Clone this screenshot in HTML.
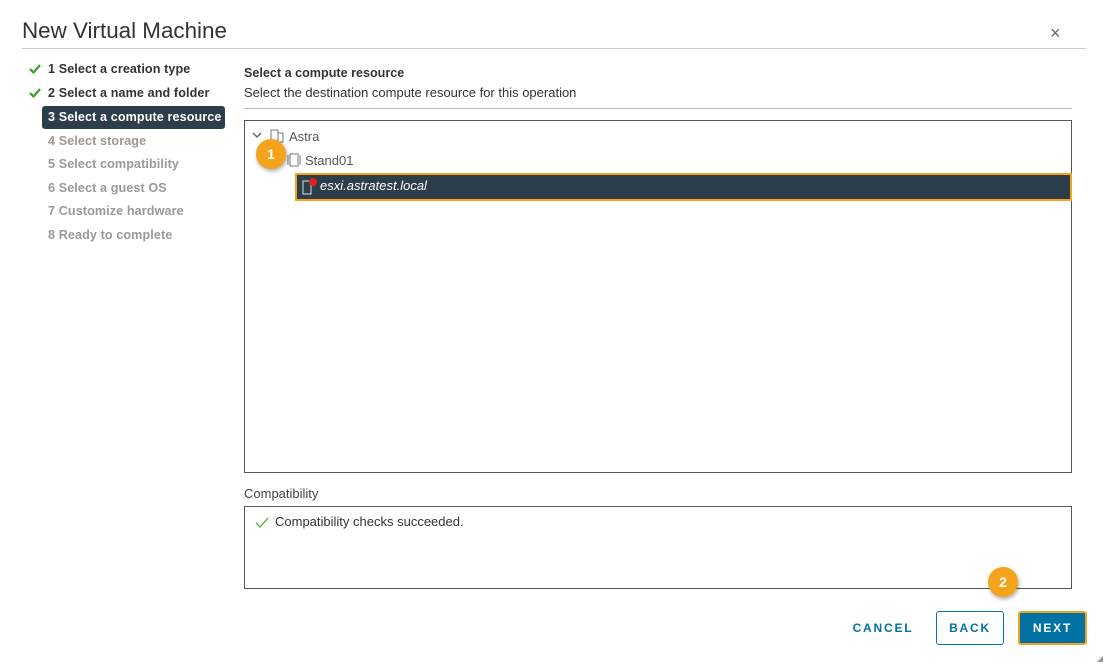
<!DOCTYPE html>
<html><head><style>
*{margin:0;padding:0;box-sizing:border-box}
body{width:1109px;height:668px;background:#fff;font-family:"Liberation Sans",sans-serif;position:relative;overflow:hidden;color:#333}
.a{position:absolute;white-space:nowrap}
.step{position:absolute;left:48px;font-size:12.6px;font-weight:bold;color:#999;letter-spacing:0.1px}
.done{color:#333}
.chk{position:absolute;left:29px}
.badge{position:absolute;width:30px;height:30px;border-radius:50%;background:#f5a31a;color:#fff;font-weight:bold;font-size:14px;text-align:center;line-height:30px;box-shadow:1px 2px 4px rgba(0,0,0,.35)}
.btn{position:absolute;font-size:12px;font-weight:bold;letter-spacing:1.8px;text-align:center;border-radius:3px}
</style></head><body>
<div class="a" style="left:22px;top:18px;font-size:22.4px;color:#333">New Virtual Machine</div>
<div class="a" style="left:1050px;top:23px;font-size:18px;color:#666">×</div>
<div class="a" style="left:22px;top:48px;width:1064px;height:1px;background:#ccc"></div>

<svg class="chk" style="top:64px" width="12" height="10"><path d="M1 5l3.5 3.5L11 1" stroke="#3c9b2e" stroke-width="2.2" fill="none"/></svg>
<svg class="chk" style="top:88px" width="12" height="10"><path d="M1 5l3.5 3.5L11 1" stroke="#3c9b2e" stroke-width="2.2" fill="none"/></svg>
<div class="step done" style="top:62px">1 Select a creation type</div>
<div class="step done" style="top:86px">2 Select a name and folder</div>
<div class="a" style="left:42px;top:106px;width:183px;height:23px;background:#2d3e4b;border-radius:3px"></div>
<div class="step" style="top:110px;color:#fff">3 Select a compute resource</div>
<div class="step" style="top:134px">4 Select storage</div>
<div class="step" style="top:157px">5 Select compatibility</div>
<div class="step" style="top:181px">6 Select a guest OS</div>
<div class="step" style="top:204px">7 Customize hardware</div>
<div class="step" style="top:228px">8 Ready to complete</div>

<div class="a" style="left:244px;top:66px;font-size:12.6px;font-weight:bold;color:#333">Select a compute resource</div>
<div class="a" style="left:244px;top:85px;font-size:13px;color:#333">Select the destination compute resource for this operation</div>
<div class="a" style="left:244px;top:108px;width:828px;height:1px;background:#bbb"></div>

<div class="a" style="left:244px;top:120px;width:828px;height:353px;border:1px solid #565656"></div>
<svg class="a" style="left:252px;top:132px" width="10" height="8"><path d="M1 1l4 4 4-4" stroke="#666" stroke-width="1.5" fill="none"/></svg>
<svg class="a" style="left:270px;top:129px" width="14" height="14"><rect x="1" y="1" width="7" height="12" fill="none" stroke="#777"/><rect x="8" y="4" width="5" height="9" fill="none" stroke="#777"/></svg>
<div class="a" style="left:289px;top:129px;font-size:13px;color:#555">Astra</div>
<svg class="a" style="left:287px;top:153px" width="14" height="14"><rect x="3" y="1" width="8" height="12" fill="none" stroke="#777"/><path d="M1 2v10M13 2v10" stroke="#777"/></svg>
<div class="a" style="left:305px;top:153px;font-size:13px;color:#555">Stand01</div>
<div class="a" style="left:295px;top:173px;width:777px;height:28px;background:#2d3e4b;border:2px solid #f5a31a"></div>
<svg class="a" style="left:302px;top:177px" width="16" height="18"><rect x="1" y="4" width="8" height="13" fill="none" stroke="#ddd"/><circle cx="11" cy="5" r="4" fill="#e02020"/></svg>
<div class="a" style="left:320px;top:178px;font-size:13px;color:#fff;font-style:italic">esxi.astratest.local</div>
<div class="badge" style="left:256px;top:139px">1</div>

<div class="a" style="left:244px;top:486px;font-size:13px;color:#444">Compatibility</div>
<div class="a" style="left:244px;top:506px;width:828px;height:83px;border:1px solid #565656"></div>
<svg class="a" style="left:255px;top:517px" width="14" height="12"><path d="M1 6l4 4L13 1" stroke="#5aaa3c" stroke-width="1.3" fill="none"/></svg>
<div class="a" style="left:275px;top:514px;font-size:13px;color:#333">Compatibility checks succeeded.</div>

<div class="badge" style="left:988px;top:567px">2</div>
<div class="btn" style="left:850px;top:621px;width:66px;color:#0072a3">CANCEL</div>
<div class="btn" style="left:936px;top:611px;width:68px;height:34px;border:1px solid #0079b8;color:#0072a3;line-height:32px">BACK</div>
<div class="btn" style="left:1018px;top:611px;width:69px;height:34px;background:#0072a3;border:2px solid #f5a31a;color:#fff;line-height:30px">NEXT</div>
<svg class="a" style="left:1096px;top:655px" width="8" height="8"><path d="M7 1L1 7h6z" fill="#999"/></svg>
</body></html>
